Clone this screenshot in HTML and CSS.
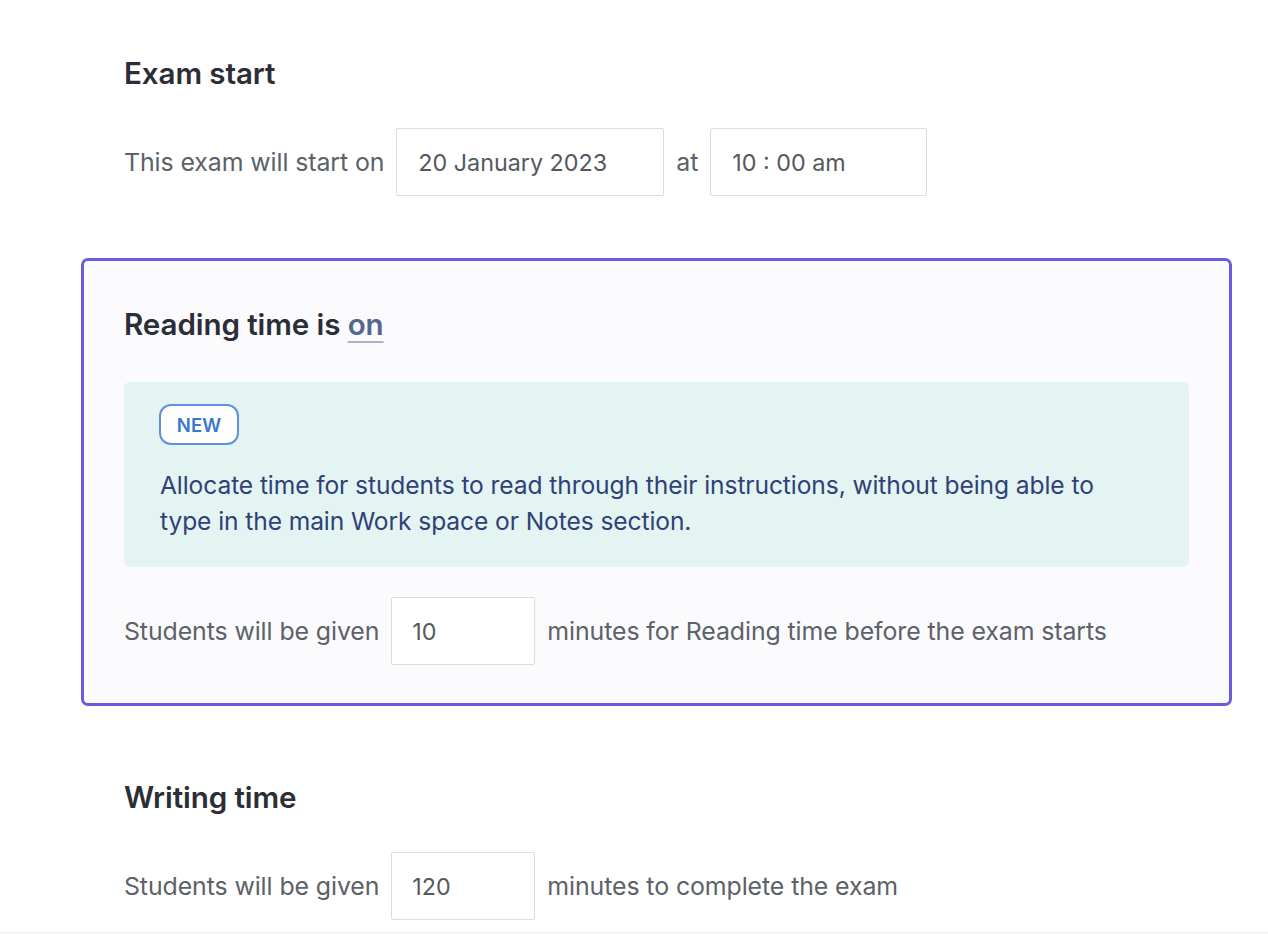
FILE: index.html
```html
<!DOCTYPE html>
<html lang="en">
<head>
<meta charset="utf-8">
<title>Exam timing</title>
<link rel="stylesheet" href="styles.css">
</head>
<body>
<main class="page">
  <section class="section first">
    <h2 class="heading">Exam start</h2>
    <div class="row">
      <span class="label">This exam will start on</span>
      <div class="field field-date">20 January 2023</div>
      <span class="label">at</span>
      <div class="field field-time">10 : 00 am</div>
    </div>
  </section>

  <section class="reading">
    <h2 class="heading">Reading time is <a class="toggle" href="#">on</a></h2>
    <div class="notice">
      <span class="badge">NEW</span>
      <p class="notice-text">Allocate time for students to read through their instructions, without being able to type in the main Work space or Notes section.</p>
    </div>
    <div class="row">
      <span class="label">Students will be given</span>
      <div class="field field-min">10</div>
      <span class="label">minutes for Reading time before the exam starts</span>
    </div>
  </section>

  <section class="section last">
    <h2 class="heading">Writing time</h2>
    <div class="row">
      <span class="label">Students will be given</span>
      <div class="field field-min">120</div>
      <span class="label">minutes to complete the exam</span>
    </div>
  </section>
</main>
</body>
</html>
```

FILE: styles.css
```css
* { box-sizing: border-box; }
html, body { margin: 0; padding: 0; background: #ffffff; }
body {
  font-family: Inter, "Noto Sans", "Liberation Sans", sans-serif;
  color: #555a61;
  height: 934px;
  overflow: hidden;
}
.page {
  height: 933px;
  border-bottom: 1px solid #e8e9ec;
  padding-top: 55px;
}
.section { padding-left: 124px; }
.heading {
  margin: 0;
  font-size: 29.6px;
  line-height: 36px;
  font-weight: 600;
  color: #2b2e36;
  letter-spacing: -0.1px;
}
.row {
  display: flex;
  align-items: center;
  gap: 12px;
}
.first .row { margin-top: 37px; }
.label {
  font-size: 24.9px;
  color: #5d6168;
  white-space: nowrap;
  letter-spacing: -0.1px;
}
.field {
  height: 68px;
  border: 1px solid #d9dce1;
  border-radius: 2px;
  background: #ffffff;
  display: flex;
  align-items: center;
  padding-left: 21px;
  font-size: 23.3px;
  color: #55595f;
}
.field-date { width: 268px; }
.field-time { width: 217px; }
.field-min { width: 144px; padding-left: 20px; }

.reading {
  margin: 62px 0 0 81px;
  width: 1151px;
  height: 448px;
  border: 3px solid #6a5ce0;
  border-radius: 7px;
  background: #fbfbfe;
  padding: 45px 40px 0 40px;
}
.toggle {
  color: #56678f;
  text-decoration: underline;
  text-decoration-color: #a9b3cb;
  text-underline-offset: 6px;
  text-decoration-thickness: 2px;
}
.notice {
  margin-top: 40px;
  background: #e3f4f3;
  border-radius: 6px;
  height: 185px;
  padding: 22px 35px 0 35px;
}
.badge {
  display: inline-flex;
  align-items: center;
  justify-content: center;
  width: 80px;
  height: 41px;
  border: 2px solid #5d93dc;
  border-radius: 12px;
  background: #ffffff;
  color: #3a77cf;
  font-size: 18.5px;
  font-weight: 600;
  letter-spacing: 0.2px;
}
.notice-text {
  margin: 22px 0 0 1px;
  max-width: 970px;
  font-size: 24.6px;
  line-height: 36px;
  color: #2f4176;
  letter-spacing: -0.1px;
}
.reading .row { margin-top: 30px; }

.last { margin-top: 73px; }
.last .row { margin-top: 37px; }
```
